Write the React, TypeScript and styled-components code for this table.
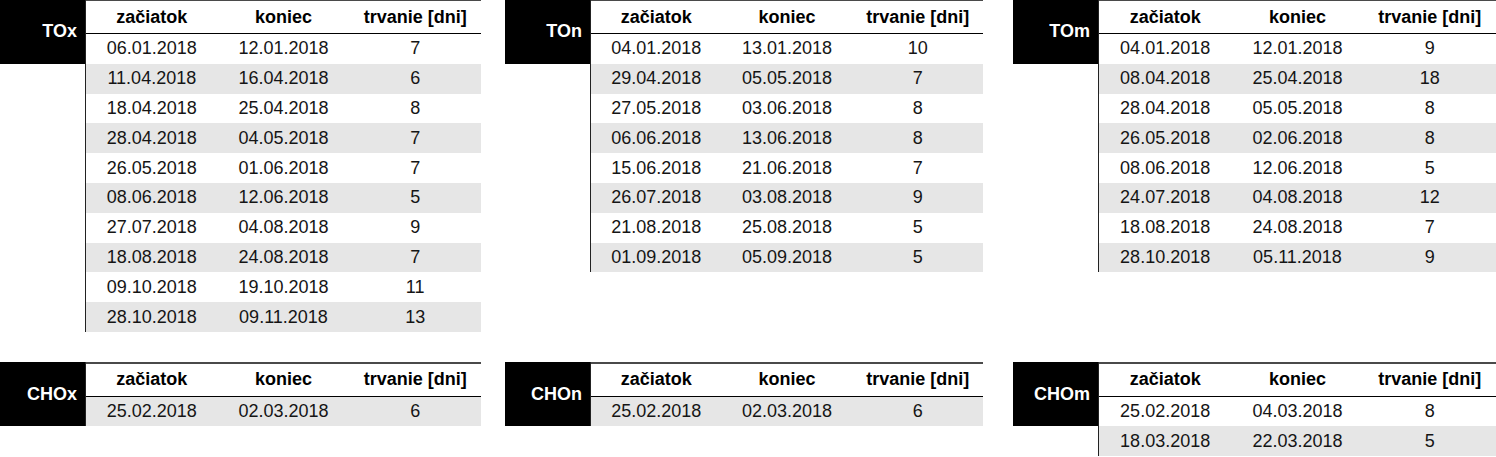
import * as React from 'react';
import styled, { createGlobalStyle } from 'styled-components';

// Data
type Period = [string, string, number];

interface PeriodTable {
    label: string;
    width: number;
    rows: Period[];
}

const topTables: PeriodTable[] = [
    {
        label: 'TOx', width: 481, rows: [
            ['06.01.2018', '12.01.2018', 7],
            ['11.04.2018', '16.04.2018', 6],
            ['18.04.2018', '25.04.2018', 8],
            ['28.04.2018', '04.05.2018', 7],
            ['26.05.2018', '01.06.2018', 7],
            ['08.06.2018', '12.06.2018', 5],
            ['27.07.2018', '04.08.2018', 9],
            ['18.08.2018', '24.08.2018', 7],
            ['09.10.2018', '19.10.2018', 11],
            ['28.10.2018', '09.11.2018', 13],
        ]
    },
    {
        label: 'TOn', width: 478, rows: [
            ['04.01.2018', '13.01.2018', 10],
            ['29.04.2018', '05.05.2018', 7],
            ['27.05.2018', '03.06.2018', 8],
            ['06.06.2018', '13.06.2018', 8],
            ['15.06.2018', '21.06.2018', 7],
            ['26.07.2018', '03.08.2018', 9],
            ['21.08.2018', '25.08.2018', 5],
            ['01.09.2018', '05.09.2018', 5],
        ]
    },
    {
        label: 'TOm', width: 483, rows: [
            ['04.01.2018', '12.01.2018', 9],
            ['08.04.2018', '25.04.2018', 18],
            ['28.04.2018', '05.05.2018', 8],
            ['26.05.2018', '02.06.2018', 8],
            ['08.06.2018', '12.06.2018', 5],
            ['24.07.2018', '04.08.2018', 12],
            ['18.08.2018', '24.08.2018', 7],
            ['28.10.2018', '05.11.2018', 9],
        ]
    },
];

const bottomTables: PeriodTable[] = [
    { label: 'CHOx', width: 481, rows: [['25.02.2018', '02.03.2018', 6]] },
    { label: 'CHOn', width: 478, rows: [['25.02.2018', '02.03.2018', 6]] },
    {
        label: 'CHOm', width: 483, rows: [
            ['25.02.2018', '04.03.2018', 8],
            ['18.03.2018', '22.03.2018', 5],
        ]
    },
];

const HEADER_HEIGHT = 35;

// Styling
const GlobalStyle = createGlobalStyle`
    html, body {
        margin: 0;
        padding: 0;
        background: #ffffff;
    }
    body {
        font-family: "Liberation Sans", Arial, sans-serif;
        color: #111111;
        overflow: hidden;
    }
`;

const Page = styled.div`
    width: 1496px;
    margin-top: -1px;
    display: flex;
    flex-direction: column;
    gap: 30px;
`;

const Section = styled.div`
    display: grid;
    grid-template-columns: 505px 508px 1fr;
    align-items: start;
`;

const Group = styled.div<{ $width: number }>`
    width: ${p => p.$width}px;
    display: flex;
    align-items: flex-start;
`;

const Label = styled.div<{ $rowHeight: number }>`
    width: 86px;
    flex: 0 0 86px;
    height: ${p => HEADER_HEIGHT + p.$rowHeight}px;
    background: #000000;
    color: #ffffff;
    font-weight: bold;
    font-size: 18px;
    display: flex;
    align-items: center;
    justify-content: flex-end;
    padding-right: 9px;
    box-sizing: border-box;
`;

const Table = styled.div`
    flex: 1;
    border-left: 1px solid #222222;
    margin-left: -1px;
`;

const HeaderRow = styled.div`
    height: ${HEADER_HEIGHT}px;
    box-sizing: border-box;
    border-top: 2px solid #4a4a4a;
    border-bottom: 1.5px solid #000000;
    display: grid;
    grid-template-columns: repeat(3, 1fr);
    align-items: center;
    font-weight: bold;
    font-size: 18px;
    color: #000000;
    text-align: center;
`;

const DataRow = styled.div<{ $shaded: boolean; $height: number }>`
    height: ${p => p.$height}px;
    display: grid;
    grid-template-columns: repeat(3, 1fr);
    align-items: center;
    background: ${p => p.$shaded ? '#e6e6e6' : '#ffffff'};
    font-size: 18px;
    color: #151515;
    text-align: center;
`;

const Cell = styled.div`
    white-space: nowrap;
`;

function PeriodGroup({ table, rowHeight }: { table: PeriodTable, rowHeight: number }) {
    const last = table.rows.length - 1;
    return (
        <Group $width={table.width}>
            <Label $rowHeight={rowHeight}>{table.label}</Label>
            <Table>
                <HeaderRow>
                    <Cell>začiatok</Cell>
                    <Cell>koniec</Cell>
                    <Cell>trvanie [dni]</Cell>
                </HeaderRow>
                {table.rows.map((row, i) =>
                    // last row is shaded, alternating upward
                    <DataRow key={i} $height={rowHeight} $shaded={(last - i) % 2 === 0}>
                        <Cell>{row[0]}</Cell>
                        <Cell>{row[1]}</Cell>
                        <Cell>{row[2]}</Cell>
                    </DataRow>
                )}
            </Table>
        </Group>
    );
}

export default function App() {
    return (
        <>
            <GlobalStyle />
            <Page>
                <Section>
                    {topTables.map(t => <PeriodGroup key={t.label} table={t} rowHeight={29.8} />)}
                </Section>
                <Section>
                    {bottomTables.map(t => <PeriodGroup key={t.label} table={t} rowHeight={29.5} />)}
                </Section>
            </Page>
        </>
    );
}
